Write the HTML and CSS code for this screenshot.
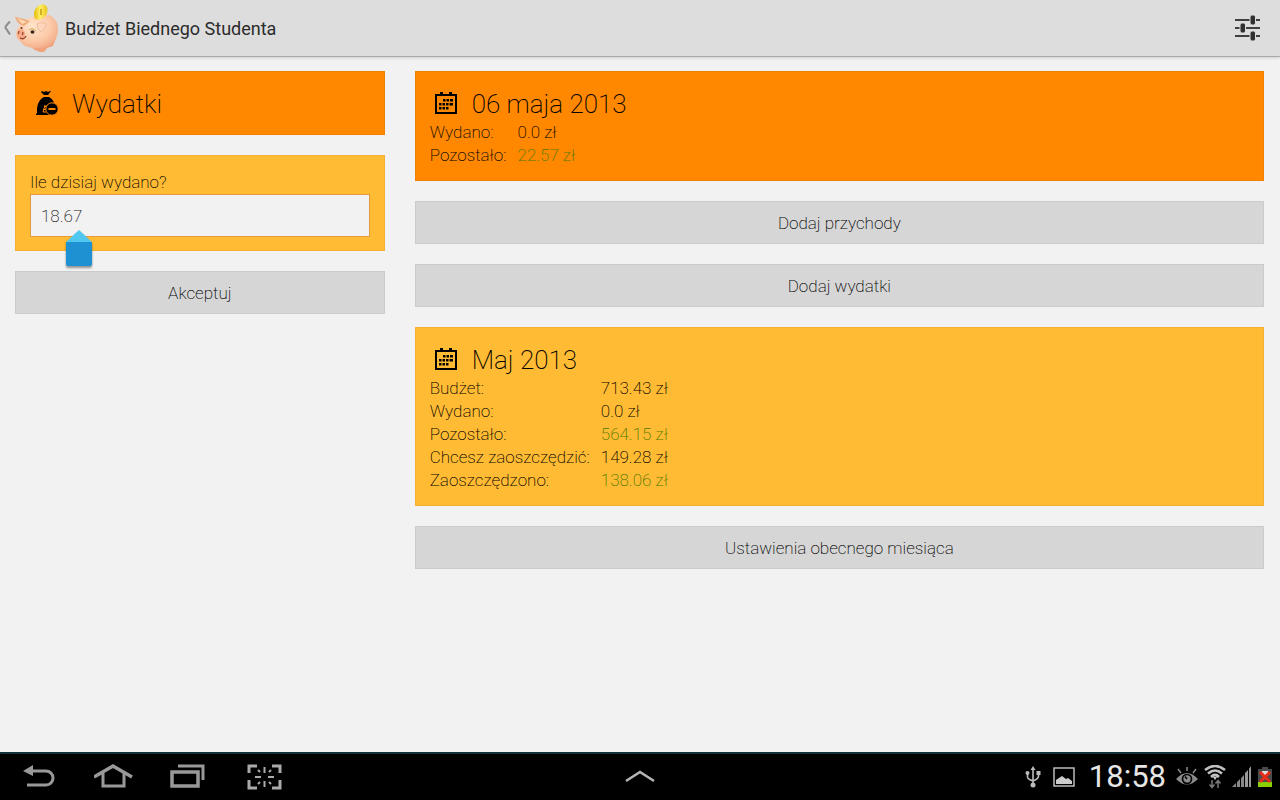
FILE: index.html
```
<!DOCTYPE html>
<html lang="pl">
<head>
<meta charset="utf-8">
<meta name="viewport" content="width=device-width, initial-scale=1">
<title>Budżet Biednego Studenta</title>
<link rel="stylesheet" href="styles.css">
</head>
<body>
<svg class="defs" aria-hidden="true">
  <symbol id="calendar" viewBox="0 1 24 24">
    <path d="M2 4h20v18H2z" fill="none" stroke="currentColor" stroke-width="2"/>
    <path d="M6 1h3v4H6zM15 1h3v4h-3z" fill="currentColor"/>
    <path d="M9 8h2.500v2.500H9zM12.500 8H15v2.500h-2.500zM16 8h3v2.500h-3zM5 12h2.500v2.500H5zM8.500 12H11v2.500H8.500zM12 12h2.500v2.500H12zM15.500 12H19v2.500h-3.500zM5 16h2.500v2.500H5zM8.500 16H11v2.500H8.500zM12 16h2.500v2.500H12z" fill="currentColor"/>
  </symbol>
</svg>

<header class="bar">
  <a class="up" href="#" aria-label="Wstecz">
    <svg class="chevron" viewBox="0 0 8 16"><path d="M6.500 1.500Q1 7 2 8t4.500 6.500" fill="none" stroke="#8c8c8c" stroke-width="2"/></svg>
    <svg class="pig" viewBox="0 0 44 54">
      <defs>
        <radialGradient id="skin" cx=".4" cy=".35" r=".75"><stop offset="0" stop-color="#ffe4cc"/><stop offset=".55" stop-color="#fccbaa"/><stop offset="1" stop-color="#f0a57e"/></radialGradient>
        <linearGradient id="gold"><stop offset="0" stop-color="#e5b800"/><stop offset=".45" stop-color="#fff06a"/><stop offset="1" stop-color="#e9c41a"/></linearGradient>
      </defs>
      <path d="M6 37q0 6 5 8l5 1q4 4 9 5 5 1 7-4l6-2 3-8z" fill="#efa27c"/>
      <path d="M15 17Q24 12 34 14q9 4 9 14 0 10-7 15-7 5-17 4Q8 46 5 40 1 38 1 33q0-4 3-8 4-6 11-8z" fill="url(#skin)"/>
      <path d="M0 16l9 2 6 2-6 5Q2 23 0 16z" fill="#f0aa79"/>
      <path d="M2 17l10 4-5 2z" fill="#ffd9b0"/>
      <path d="M22 23q4-3 9 0l-1 4-4 4q-4-3-4-8z" fill="#ffd6bb" stroke="#eab192" stroke-width=".7"/>
      <ellipse cx="6" cy="33" rx="4" ry="5" fill="#f8ad8c"/>
      <path d="M4 30q-1 2 0 3M8 31q-1 2 0 3M5 37q4 2 6-2" fill="none" stroke="#a34c35" stroke-width="1.500"/>
      <ellipse cx="17.500" cy="31" rx="2" ry="1.700" fill="#392819"/><ellipse cx="6.500" cy="27" rx="1.200" ry="1" fill="#6a4025"/>
      <path d="M14 29q4-3 7 1" fill="none" stroke="#d5a64d" stroke-width="1"/>
      <path d="M20 18q-3-8 3-13 6-4 9 1 2 7-4 11-4 3-8 1z" fill="url(#gold)"/>
      <path d="M26 8v6" stroke="#c79c0a" stroke-width="1.500"/>
    </svg>
  </a>
  <h1 class="app-title">Budżet Biednego Studenta</h1>
  <button class="icon-button" aria-label="Ustawienia">
    <svg class="sliders" viewBox="0 0 28 28"><path d="M1 6h25M1 14h25M1 22h25" stroke="#404040" stroke-width="2"/><g fill="#303030" stroke="#dcdcdc"><rect x="16" y="1" width="5.500" height="10" rx="2"/><rect x="6" y="9" width="5.500" height="10" rx="2"/><rect x="16" y="17" width="5.500" height="10" rx="2"/></g></svg>
  </button>
</header>

<main class="content">
  <form class="column">
    <section class="card card-deep">
      <h2 class="card-title">
        <svg class="title-icon" viewBox="-1 1 24 24"><path d="M7 0l2 1 2-1 2 1 2-1h1l-3 4h-4L6 1z"/><path d="M9 6h5q5 3 5 7l-3 11H1v-1.500h1V17Q3 9 9 6z"/><circle cx="17" cy="18" r="6.200" stroke="#ff8800" stroke-width="1"/><path d="M13.500 18h7" stroke="#ff8800" stroke-width="2"/><path d="M10 14l-2 7h3M9 16l3-1M8 19l3-1" fill="none" stroke="#ff8800"/></svg>
        Wydatki
      </h2>
    </section>
    <section class="card card-light">
      <label class="field-label" for="amount">Ile dzisiaj wydano?</label>
      <div class="field">
        <input class="amount" id="amount" type="text" inputmode="decimal" value="18.67">
        <svg class="handle" viewBox="0 0 32 40" aria-hidden="true"><path d="M3 12h26v22q0 2-2 2H5q-2 0-2-2z" fill="#1d91d2"/><path d="M16 0l13 12H3z" fill="#50c7ef"/></svg>
      </div>
    </section>
    <button class="button" type="button">Akceptuj</button>
  </form>

  <div class="column">
    <section class="card card-deep">
      <h2 class="card-title"><svg class="title-icon"><use href="#calendar"/></svg>06 maja 2013</h2>
      <table class="figures">
        <tr><th scope="row">Wydano:</th><td>0.0 zł</td></tr>
        <tr><th scope="row">Pozostało:</th><td class="positive">22.57 zł</td></tr>
      </table>
    </section>
    <button class="button" type="button">Dodaj przychody</button>
    <button class="button" type="button">Dodaj wydatki</button>
    <section class="card card-light">
      <h2 class="card-title"><svg class="title-icon"><use href="#calendar"/></svg>Maj 2013</h2>
      <table class="figures">
        <tr><th scope="row">Budżet:</th><td>713.43 zł</td></tr>
        <tr><th scope="row">Wydano:</th><td>0.0 zł</td></tr>
        <tr><th scope="row">Pozostało:</th><td class="positive">564.15 zł</td></tr>
        <tr><th scope="row">Chcesz zaoszczędzić:</th><td>149.28 zł</td></tr>
        <tr><th scope="row">Zaoszczędzono:</th><td class="positive">138.06 zł</td></tr>
      </table>
    </section>
    <button class="button" type="button">Ustawienia obecnego miesiąca</button>
  </div>
</main>

<footer class="system">
  <nav class="keys">
    <button class="key" aria-label="Wróć"><svg viewBox="0 0 40 28"><path d="M11 8h16a7 7 0 0 1 0 14H8" fill="none" stroke="#999" stroke-width="3"/><path d="M4 8l10-6v11z" fill="#999"/></svg></button>
    <button class="key" aria-label="Ekran główny"><svg viewBox="0 0 40 28"><path d="M0 14L19 3l19 11" fill="none" stroke="#999" stroke-width="3.500"/><path d="M9 10v13h21V10" fill="none" stroke="#999" stroke-width="3"/></svg></button>
    <button class="key" aria-label="Ostatnie"><svg viewBox="0 0 40 28"><path d="M9 3h25v14" fill="none" stroke="#999" stroke-width="3"/><path d="M3 9h26v14H3z" fill="none" stroke="#999" stroke-width="3.500"/></svg></button>
    <button class="key" aria-label="Zrzut ekranu"><svg viewBox="0 0 40 28"><path d="M13 3H5v7M28 3h8v7M5 17v8h8M28 25h8v-8" fill="none" stroke="#aaa" stroke-width="3"/><path d="M20.500 4v6M20.500 18v6M11 14h6M24 14h6M14 7l2 2M27 7l-2 2M14 21l2-2M27 21l-2-2" stroke="#aaa" stroke-width="2"/></svg></button>
  </nav>
  <button class="key expand" aria-label="Rozwiń"><svg viewBox="0 0 40 28"><path d="M6 18l14-9 14 9" fill="none" stroke="#b5b5b5" stroke-width="2.500"/></svg></button>
  <div class="status">
    <svg class="usb" viewBox="0 0 16 24"><path d="M8 3v16M2.500 8v4q0 2 5.500 4 5.500-2 5.500-5V8" fill="none" stroke="#bbb" stroke-width="1.600"/><path d="M8 1l2.500 4h-5z" fill="#bbb"/><circle cx="2.500" cy="8" r="2" fill="#bbb"/><path d="M11.500 6h4v4h-4z" fill="#bbb"/><circle cx="8" cy="20" r="2.500" fill="#bbb"/></svg>
    <svg class="picture" viewBox="0 0 22 20"><path d="M1 1h20v18H1z" fill="none" stroke="#bbb" stroke-width="1.500"/><path d="M3 17v-4l6-4 4 3 2-1 4 3v3z" fill="#ccc"/></svg>
    <time class="clock">18:58</time>
    <svg class="eye" viewBox="0 0 22 20"><path d="M0 12q11-12 22 0-11 11-22 0z" fill="#8b8b8b"/><circle cx="11" cy="12" r="4.500" fill="#8b8b8b" stroke="#000" stroke-width="1.700"/><path d="M11 12L9 9.500" stroke="#000" stroke-width="1.500"/><path d="M11 0v4M2 2l3 4M20 2l-3 4" stroke="#8b8b8b" stroke-width="1.500"/></svg>
    <svg class="wifi" viewBox="0 0 22 24"><path d="M1 5q10-8 20 0M4 8.500q7-6 14 0M7 12q4-4 8 0" fill="none" stroke="#c0c0c0" stroke-width="2.600"/><path d="M9 12l2 3 2-3z" fill="#ccc"/><path d="M8 15v7M5.500 19.500L8 22.500l2.500-3M14 23v-7M11.500 18.500L14 15.500l2.500 3" fill="none" stroke="#777" stroke-width="1.500"/></svg>
    <svg class="signal" viewBox="0 0 20 22"><path d="M0 21l4-4v4zM5 16l3-3v8H5zM9 12l3-3v12H9z" fill="#888"/><path d="M13 7l3-3v17h-3zM17 3l2-3v21h-2z" fill="#999"/></svg>
    <svg class="battery" viewBox="0 0 14 20"><path d="M4 0h6v2h4v18H0V2h4z" fill="#4b4b4b"/><path d="M0 15h14v5H0z" fill="#8bd000"/><path d="M4 4h6v4H4z" fill="#ddd"/><path d="M2 5l10 10M12 5L2 15" stroke="#e72c18" stroke-width="3"/></svg>
  </div>
</footer>
</body>
</html>
```
FILE: styles.css
```
* { box-sizing: border-box; }

body {
  margin: 0;
  min-height: 100vh;
  display: flex;
  flex-direction: column;
  background: #f2f2f2;
  color: #000;
  font: 200 17px/23px Roboto, sans-serif;
}

svg { display: block; }
.defs { position: absolute; width: 0; height: 0; }

button {
  font: inherit;
  color: inherit;
  border: 0;
  padding: 0;
  background: none;
}

.bar {
  display: flex;
  align-items: center;
  height: 57px;
  padding: 0 16px 0 3px;
  background: #dddddd;
  border-bottom: 1px solid #a9a9a9;
  box-shadow: 0 1px 3px #00000026;
}
.up { display: flex; align-items: center; gap: 3px; }
.chevron { width: 9px; height: 16px; }
.pig { width: 44px; height: 54px; }
.app-title {
  flex: 1;
  margin: 0 0 0 6px;
  font-size: 18px;
  font-weight: 400;
  color: #2b2b2b;
}
.icon-button { padding: 0 2px; }
.sliders { width: 28px; height: 28px; }

.content {
  flex: 1;
  display: grid;
  grid-template-columns: minmax(0, 37fr) minmax(0, 85fr);
  align-items: start;
  gap: 30px;
  padding: 14px 16px 14px 15px;
}
.column { display: flex; flex-direction: column; gap: 20px; }

.card { padding: 16px 15px 14px; box-shadow: inset 0 0 0 1px #0000000d; }
.card-deep { background: #ff8800; }
.card-light { background: #ffbb33; }

.card-title {
  display: flex;
  align-items: center;
  gap: 14px;
  margin: 0;
  padding-left: 4px;
  font-size: 26px;
  font-weight: 200;
  line-height: 34px;
}
.title-icon { width: 24px; height: 24px; overflow: visible; }

.figures { border-collapse: collapse; }
.figures th { padding: 0 11px 0 0; font-weight: inherit; text-align: left; }
.figures td { padding: 0; }
.figures .positive { color: #4c7a00; }

.field-label { display: block; }
.field { position: relative; }
.amount {
  display: block;
  width: 100%;
  height: 43px;
  padding: 0 10px;
  border: 1px solid #e39a3c;
  border-radius: 0;
  outline: 0;
  background: #f2f2f2;
  color: #222;
  font: inherit;
}
.handle {
  position: absolute;
  left: 33px;
  top: 36px;
  width: 32px;
  height: 40px;
  filter: drop-shadow(0 2px 1px #00000066);
}

.button {
  height: 43px;
  padding-top: 1px;
  background: #d6d6d6;
  box-shadow: inset 0 0 0 1px #0000000d;
  text-align: center;
}

.system {
  display: grid;
  grid-template-columns: 1fr auto 1fr;
  align-items: center;
  height: 48px;
  padding: 0 8px 0 19px;
  border-top: 2px solid #12303c;
  background: #000;
}
.keys { display: flex; gap: 35px; }
.key svg { width: 40px; height: 28px; }
.expand { margin-right: 11px; }
.status { display: flex; align-items: center; justify-content: flex-end; gap: 6px; }
.usb { width: 16px; height: 24px; margin-right: 6px; }
.picture { width: 22px; height: 20px; margin-right: 8px; }
.clock { margin-right: 4px; color: #e6e6e6; font-size: 31px; font-weight: 400; line-height: 40px; }
.eye { width: 22px; height: 20px; }
.wifi { width: 22px; height: 24px; }
.signal { width: 20px; height: 22px; }
.battery { width: 14px; height: 20px; }
```
